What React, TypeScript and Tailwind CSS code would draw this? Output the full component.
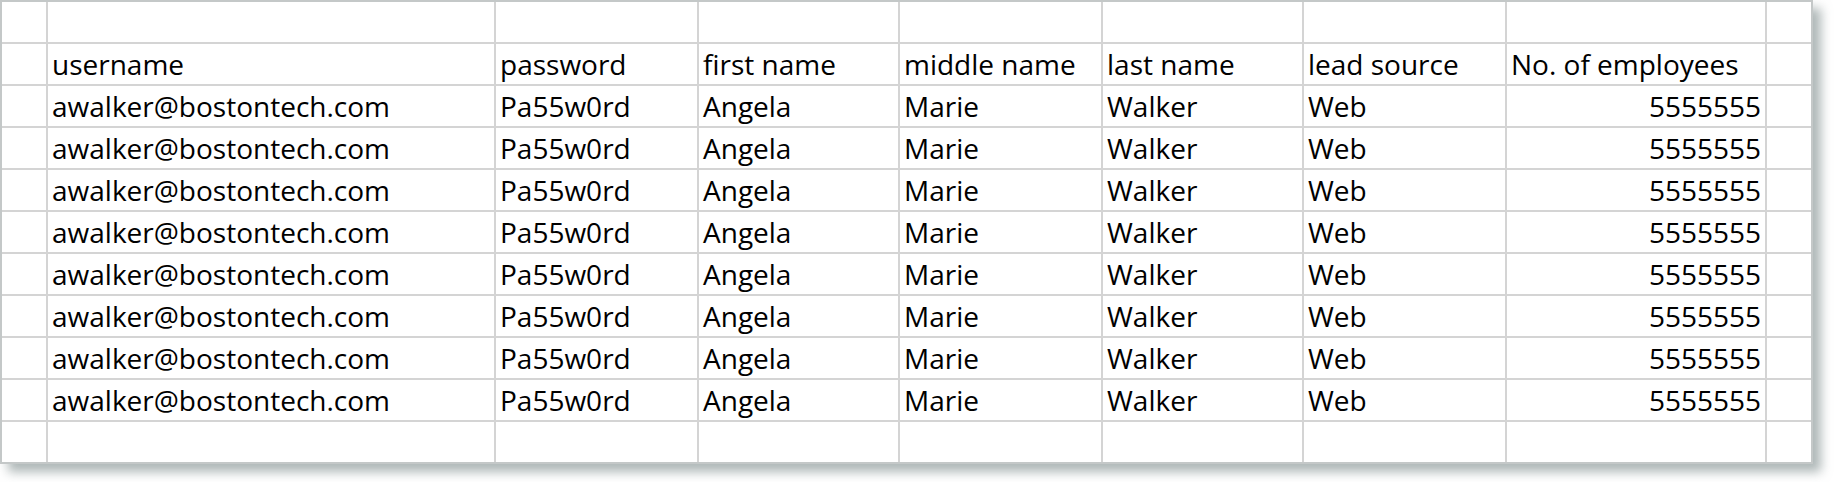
// Spreadsheet-style grid of lead records

const cols = ["w-[44px]", "w-[446px]", "w-[201px]", "w-[199px]", "w-[201px]", "w-[199px]", "w-[201px]", "w-[258px]", "w-[44px]"]

const header = ["", "username", "password", "first name", "middle name", "last name", "lead source", "No. of employees", ""]

const record = ["", "awalker@bostontech.com", "Pa55w0rd", "Angela", "Marie", "Walker", "Web", "5555555", ""]

const empty = ["", "", "", "", "", "", "", "", ""]

const rows = [empty, header, record, record, record, record, record, record, record, record, empty]

function Cell({ text, width, right }: { text: string; width: string; right: boolean }) {
  return (
    <div
      className={
        "h-[40px] bg-white flex items-end overflow-hidden whitespace-nowrap pb-[6px] " +
        width +
        (right ? " justify-end pr-[4px]" : " pl-[4px]")
      }
    >
      <span className="leading-none">{text}</span>
    </div>
  )
}

export default function App() {
  return (
    <div className="w-[1834px] h-[482px] bg-white">
      <div
        className="w-fit border-2 border-[#c4c8c8] bg-[#d4d4d4] flex flex-col gap-[2px] shadow-[8px_8px_10px_rgba(110,125,125,0.55)] text-black text-[28px]"
        style={{ fontFamily: '"Open Sans", sans-serif' }}
      >
        {rows.map((row, r) => (
          <div key={r} className="flex gap-[2px]">
            {row.map((text, c) => (
              <Cell key={c} text={text} width={cols[c]} right={r > 1 && c === 7} />
            ))}
          </div>
        ))}
      </div>
    </div>
  )
}
